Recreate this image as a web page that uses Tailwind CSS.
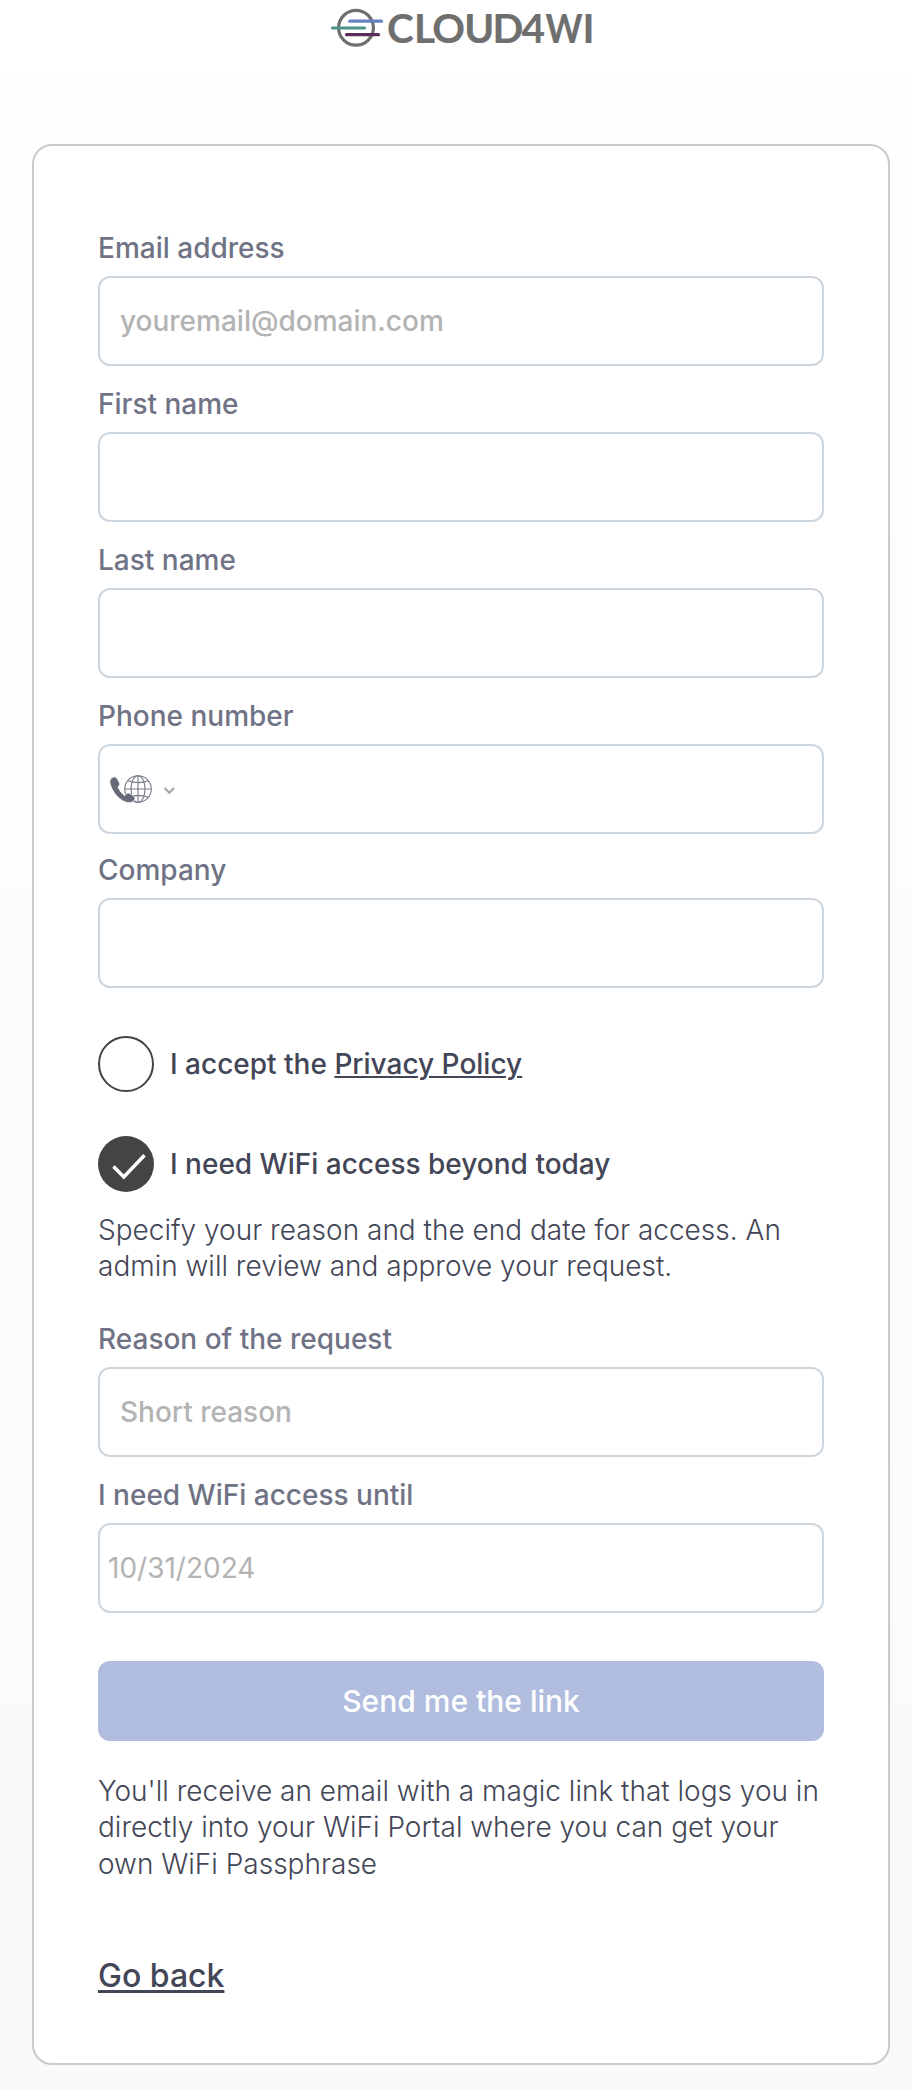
<!DOCTYPE html>
<html lang="en">
<head>
<meta charset="utf-8">
<title>Cloud4Wi</title>
<script src="https://cdn.jsdelivr.net/npm/@tailwindcss/browser@4"></script>
</head>
<body class="h-[2090px] bg-gradient-to-b from-white to-[#f7f9fb] font-['Inter',sans-serif] text-[28px] leading-[34px] text-[#434656]">
<header class="flex h-[144px] justify-center pl-2">
  <svg class="h-[60px] w-[280px] overflow-visible" viewBox="0 0 280 60" role="img" aria-label="CLOUD4WI">
    <circle cx="36" cy="27.8" r="17.400" fill="none" stroke="#6f6f6f" stroke-width="3.200"/>
    <g stroke-width="3.2" stroke-linecap="round">
      <path d="M29.800 21.200H61.500" stroke="#6482c3"/>
      <path d="M12.500 28H44.500" stroke="#4b9488"/>
      <path d="M26.500 34.700H58.500" stroke="#5a2d5a"/>
    </g>
    <g font-family="Lato, sans-serif" font-weight="700" font-size="40.500" fill="#6f6f6f" stroke="#6f6f6f" stroke-width=".2" stroke-linejoin="round">
      <text y="43" x="67 94 112.300 144.300 172.500 201.500">CLOUD4</text>
      <text y="43" x="225.500" textLength="37" lengthAdjust="spacingAndGlyphs">W</text>
      <text y="43" x="262.500">I</text>
    </g>
  </svg>
</header>
<main class="ml-8 flex h-[1921px] w-[858px] flex-col rounded-[20px] border-2 border-[#cacaca] bg-white px-16 pt-[85px]">
  <div class="flex flex-col gap-[21px] font-medium text-[#6f7385]">
    <label class="flex flex-col gap-[11px]">Email address
      <input class="h-[90px] rounded-xl border-2 border-[#ced6dd] px-5 placeholder:text-[#b3b3b3]" placeholder="youremail@domain.com"></label>
    <label class="flex flex-col gap-[11px]">First name
      <input class="h-[90px] rounded-xl border-2 border-[#ced6dd] px-5"></label>
    <label class="flex flex-col gap-[11px]">Last name
      <input class="h-[90px] rounded-xl border-2 border-[#ced6dd] px-5"></label>
    <div class="flex flex-col gap-[11px]"><span>Phone number</span>
      <div class="flex h-[90px] items-center rounded-xl border-2 border-[#ced6dd] pl-2">
        <svg class="h-[34px] w-[70px]" viewBox="0 0 70 34" fill="none">
          <g stroke="#777b86" stroke-width="1.1"><circle cx="30" cy="17" r="13.3"/><ellipse cx="30" cy="17" rx="7" ry="13.3"/><path d="M30 3.7V30.3M16.7 17H43.3M20 8.8Q30 12.5 40 8.8M20 25.2Q30 21.5 40 25.2"/></g>
          <path d="M3.5 5.800Q1 8 2.100 12Q5 22.500 14.500 28.700Q19.500 31.500 23.500 30.400Q26 29.500 27 26.800Q27.400 25 25.500 23.800L21.500 21.200Q19.500 20.400 18 22L16.600 23.700Q12.200 20.300 10 15.200L11.200 13.600Q12.400 12.300 11.300 10.400L9 6.200Q6.800 3.500 3.500 5.800Z" fill="#666a77" stroke="#fff" stroke-width=".8"/>
          <path d="M56.500 16L61.300 20.800L66.100 16" stroke="#a4a4a8" stroke-width="2.100"/>
        </svg>
      </div></div>
    <label class="-mt-[2px] flex flex-col gap-[11px]">Company
      <input class="h-[90px] rounded-xl border-2 border-[#ced6dd] px-5"></label>
  </div>
  <div class="mt-12 flex flex-col gap-11 font-medium">
    <div class="flex h-14 items-center gap-4"><span class="size-14 rounded-full border-2 border-[#444]"></span><span>I accept the <a class="underline decoration-2 underline-offset-2">Privacy Policy</a></span></div>
    <div class="flex h-14 items-center gap-4">
      <svg class="size-14" viewBox="0 0 56 56"><circle cx="28" cy="28" r="28" fill="#444"/><path d="M15.500 30.500L25.800 41L46.500 19.300" fill="none" stroke="#fff" stroke-width="3.500"/></svg>
      <span>I need WiFi access beyond today</span></div>
  </div>
  <p class="mt-5 text-[28px] leading-[36.4px] font-light">Specify your reason and the end date for access. An admin will review and approve your request.</p>
  <div class="mt-[37px] flex flex-col gap-[21px] font-medium text-[#6f7385]">
    <label class="flex flex-col gap-[11px]">Reason of the request
      <input class="h-[90px] rounded-xl border-2 border-[#ced6dd] px-5 placeholder:text-[#b3b3b3]" placeholder="Short reason"></label>
    <label class="flex flex-col gap-[11px]">I need WiFi access until
      <input class="h-[90px] rounded-xl border-2 border-[#ced6dd] px-2 font-normal placeholder:text-[#b3b3b3]" placeholder="10/31/2024"></label>
  </div>
  <button class="mt-12 h-20 rounded-xl bg-[#b1bddf] text-[30px] font-medium text-white">Send me the link</button>
  <p class="mt-8 text-[28px] leading-[36.4px] font-light">You'll receive an email with a magic link that logs you in directly into your WiFi Portal where you can get your own WiFi Passphrase</p>
  <a class="mt-[74px] self-start text-[32px] leading-[39px] font-medium underline decoration-[3px] underline-offset-[3px]">Go back</a>
</main>
</body>
</html>
